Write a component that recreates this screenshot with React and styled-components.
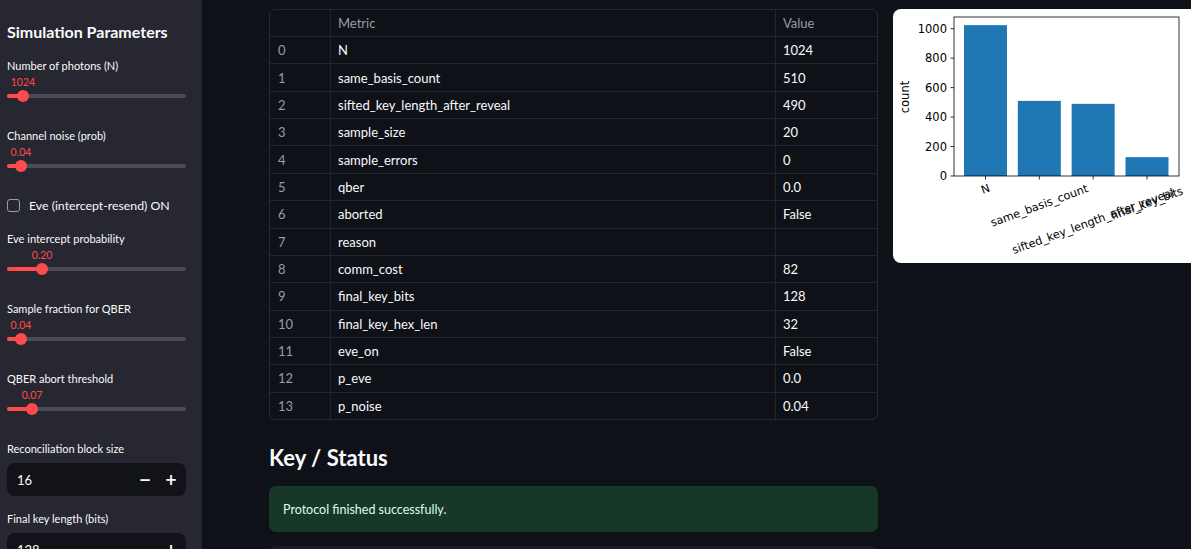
import React from "react";
import styled, { createGlobalStyle } from "styled-components";

const Global = createGlobalStyle`
  html, body { margin: 0; padding: 0; background: #0e1117; overflow: hidden; }
  body { font-family: Lato, "Liberation Sans", sans-serif; color: #fafafa; }
  * { box-sizing: border-box; }
`;

const Shell = styled.div`
  display: flex;
  width: 1191px;
  height: 549px;
  overflow: hidden;
`;

const Sidebar = styled.aside`
  flex: 0 0 202px;
  background: #262730;
  padding: 22px 16px 0 7px;
  display: flex;
  flex-direction: column;
  overflow: hidden;
  & > * { flex-shrink: 0; }
`;

const SideTitle = styled.h2`
  margin: 0 0 16px;
  font-size: 16px;
  line-height: 20px;
  font-weight: 700;
  color: #fafafa;
  white-space: nowrap;
`;

const Field = styled.div`
  margin-bottom: ${(p) => (p.$gap !== undefined ? p.$gap : 26)}px;
`;

const Label = styled.div`
  font-size: 11px;
  line-height: 16px;
  color: #fafafa;
  white-space: nowrap;
`;

const SliderBox = styled.div`
  position: relative;
  height: 28px;
`;

const Track = styled.div`
  position: absolute;
  left: 0;
  right: 0;
  top: 20px;
  height: 4px;
  border-radius: 2px;
  background: #4a4b53;
`;

const Fill = styled.div`
  position: absolute;
  left: 0;
  top: 20px;
  height: 4px;
  border-radius: 2px;
  background: #ff4b4b;
`;

const Thumb = styled.div`
  position: absolute;
  top: 16px;
  width: 12px;
  height: 12px;
  margin-left: -6px;
  border-radius: 50%;
  background: #ff4b4b;
`;

const ThumbValue = styled.div`
  position: absolute;
  top: 1px;
  transform: translateX(-50%);
  font-size: 10.5px;
  line-height: 14px;
  color: #ff4b4b;
  white-space: nowrap;
`;

const CheckRow = styled.label`
  display: flex;
  align-items: center;
  gap: 9px;
  height: 20px;
  margin-bottom: 16px;
  font-size: 12.3px;
  color: #fafafa;
  white-space: nowrap;
`;

const CheckBox = styled.span`
  width: 13px;
  height: 13px;
  border: 1px solid #9a9ba3;
  border-radius: 3px;
  flex: none;
`;

const NumberBox = styled.div`
  margin-top: 6px;
  height: 33px;
  border-radius: 8px;
  background: #111319;
  display: flex;
  align-items: center;
  padding: 0 2px 0 10px;
`;

const NumberValue = styled.span`
  flex: 1;
  font-size: 13px;
  color: #fafafa;
`;

const StepButton = styled.span`
  width: 26px;
  text-align: center;
  font-size: 15px;
  font-weight: 700;
  color: #fafafa;
  font-family: "DejaVu Sans", sans-serif;
`;

const Main = styled.main`
  flex: 1;
  min-width: 0;
  padding: 9px 0 0 67px;
`;

const Columns = styled.div`
  display: flex;
  gap: 15px;
  align-items: flex-start;
`;

const LeftCol = styled.div`
  flex: 0 0 609px;
`;

const TableWrap = styled.div`
  border: 1px solid #262a31;
  border-radius: 6px;
  overflow: hidden;
  background: #0e1117;
`;

const Row = styled.div`
  display: grid;
  grid-template-columns: 60px 445px 1fr;
  height: ${(p) => (p.$head ? "26px" : "27.36px")};
  border-top: ${(p) => (p.$head ? "none" : "1px solid #22252c")};
`;

const Cell = styled.div`
  display: flex;
  align-items: center;
  padding-left: ${(p) => (p.$index ? 8 : 7)}px;
  border-left: ${(p) => (p.$index ? "none" : "1px solid #22252c")};
  font-size: 13px;
  color: ${(p) => (p.$muted ? "#9a9ca4" : "#fafafa")};
  white-space: nowrap;
  overflow: hidden;
`;

const Heading = styled.h2`
  margin: 24px 0 14px;
  font-size: 22px;
  line-height: 28px;
  font-weight: 700;
  color: #fafafa;
`;

const Alert = styled.div`
  height: 46px;
  border-radius: 7px;
  background: #173828;
  display: flex;
  align-items: center;
  padding: 0 14px;
  font-size: 12.5px;
  color: #dffde9;
  margin-bottom: 14px;
`;

const CodeBox = styled.div`
  height: 40px;
  border-radius: 7px;
  background: #1a1c23;
`;

const ChartCard = styled.div`
  flex: 0 0 320px;
  height: 254px;
  background: #ffffff;
  border-radius: 8px;
  overflow: hidden;
`;

const sliders = [
  { label: "Number of photons (N)", value: "1024", pct: 8.9 },
  { label: "Channel noise (prob)", value: "0.04", pct: 7.8, gap: 23 },
];
const sliders2 = [
  { label: "Eve intercept probability", value: "0.20", pct: 19.6 },
  { label: "Sample fraction for QBER", value: "0.04", pct: 7.8 },
  { label: "QBER abort threshold", value: "0.07", pct: 14 },
];

const rows = [
  ["N", "1024"],
  ["same_basis_count", "510"],
  ["sifted_key_length_after_reveal", "490"],
  ["sample_size", "20"],
  ["sample_errors", "0"],
  ["qber", "0.0"],
  ["aborted", "False"],
  ["reason", ""],
  ["comm_cost", "82"],
  ["final_key_bits", "128"],
  ["final_key_hex_len", "32"],
  ["eve_on", "False"],
  ["p_eve", "0.0"],
  ["p_noise", "0.04"],
];

function Slider({ label, value, pct, gap }) {
  return (
    <Field $gap={gap}>
      <Label>{label}</Label>
      <SliderBox>
        <Track />
        <Fill style={{ width: `${pct}%` }} />
        <Thumb style={{ left: `${pct}%` }} />
        <ThumbValue style={{ left: `${pct}%` }}>{value}</ThumbValue>
      </SliderBox>
    </Field>
  );
}

function NumberInput({ label, value, gap }) {
  return (
    <Field $gap={gap}>
      <Label>{label}</Label>
      <NumberBox>
        <NumberValue>{value}</NumberValue>
        <StepButton>−</StepButton>
        <StepButton>+</StepButton>
      </NumberBox>
    </Field>
  );
}

function Chart() {
  const bars = [
    ["N", 1024],
    ["same_basis_count", 510],
    ["sifted_key_length_after_reveal", 490],
    ["final_key_bits", 128],
  ];
  const y0 = 176;
  const k = 0.1473;
  const step = 53.83;
  const ticks = [0, 200, 400, 600, 800, 1000];
  const rad = (20 * Math.PI) / 180;
  return (
    <svg width="320" height="254" viewBox="893 9 320 254" fontFamily="'DejaVu Sans', sans-serif">
      {bars.map(([name, v], i) => (
        <rect key={name} x={964 + i * step} y={y0 - v * k} width={43} height={v * k} fill="#1f77b4" />
      ))}
      <rect x="954" y="17" width="225" height="159" fill="none" stroke="#000" strokeWidth="0.8" />
      {ticks.map((t) => (
        <g key={t}>
          <line x1="950.5" x2="954" y1={y0 - t * k} y2={y0 - t * k} stroke="#000" strokeWidth="0.8" />
          <text x="947" y={y0 - t * k} fontSize="11.5" textAnchor="end" dominantBaseline="central" fill="#000">
            {t}
          </text>
        </g>
      ))}
      <text
        x="905"
        y="97"
        fontSize="11.5"
        textAnchor="middle"
        dominantBaseline="central"
        transform="rotate(-90 905 97)"
        fill="#000"
      >
        count
      </text>
      {bars.map(([name], i) => {
        const cx = 985.5 + i * step;
        const w = name.length * 6.5;
        const h = w * Math.sin(rad) + 13 * Math.cos(rad);
        const cy = 182 + h / 2;
        return (
          <g key={name}>
            <line x1={cx} x2={cx} y1={y0} y2={y0 + 3.5} stroke="#000" strokeWidth="0.8" />
            <text
              x={cx}
              y={cy}
              fontSize="11.3"
              textAnchor="middle"
              dominantBaseline="central"
              transform={`rotate(-20 ${cx} ${cy})`}
              fill="#000"
            >
              {name}
            </text>
          </g>
        );
      })}
    </svg>
  );
}

export default function App() {
  return (
    <>
      <Global />
      <Shell>
        <Sidebar>
          <SideTitle>Simulation Parameters</SideTitle>
          {sliders.map((s) => (
            <Slider key={s.label} {...s} />
          ))}
          <CheckRow>
            <CheckBox />
            Eve (intercept-resend) ON
          </CheckRow>
          {sliders2.map((s) => (
            <Slider key={s.label} {...s} />
          ))}
          <NumberInput label="Reconciliation block size" value="16" gap={15} />
          <NumberInput label="Final key length (bits)" value="128" gap={0} />
        </Sidebar>
        <Main>
          <Columns>
            <LeftCol>
              <TableWrap>
                <Row $head>
                  <Cell $index $muted></Cell>
                  <Cell $muted>Metric</Cell>
                  <Cell $muted>Value</Cell>
                </Row>
                {rows.map(([m, v], i) => (
                  <Row key={m}>
                    <Cell $index $muted>{i}</Cell>
                    <Cell>{m}</Cell>
                    <Cell>{v}</Cell>
                  </Row>
                ))}
              </TableWrap>
              <Heading>Key / Status</Heading>
              <Alert>Protocol finished successfully.</Alert>
              <CodeBox />
            </LeftCol>
            <ChartCard>
              <Chart />
            </ChartCard>
          </Columns>
        </Main>
      </Shell>
    </>
  );
}
